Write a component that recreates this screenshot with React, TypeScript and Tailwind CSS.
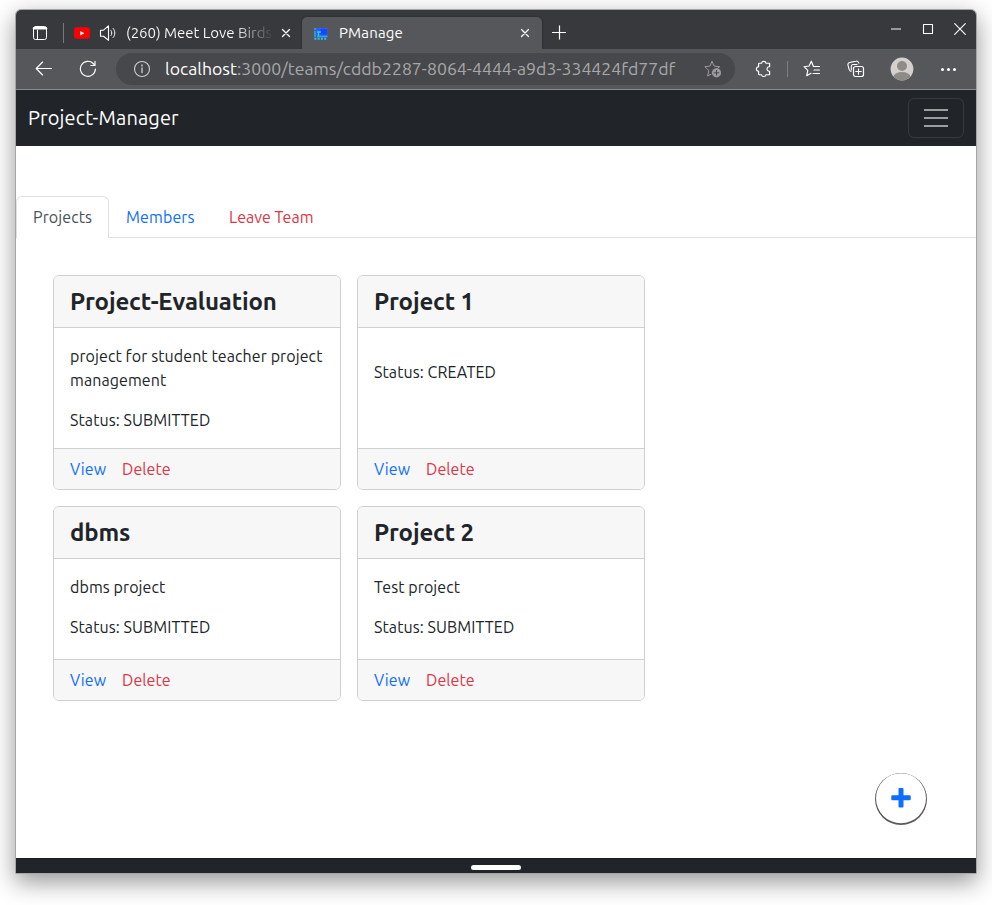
import type { ReactNode } from "react";

type Project = {
  name: string;
  description: string;
  status: string;
};

const projects: Project[] = [
  {
    name: "Project-Evaluation",
    description: "project for student teacher project management",
    status: "SUBMITTED",
  },
  { name: "Project 1", description: "", status: "CREATED" },
  { name: "dbms", description: "dbms project", status: "SUBMITTED" },
  { name: "Project 2", description: "Test project", status: "SUBMITTED" },
];

function Icon({ className, size = 16, children }: { className?: string; size?: number; children: ReactNode }) {
  return (
    <svg
      className={`block shrink-0 ${className ?? ""}`}
      width={size}
      height={size}
      viewBox={`0 0 ${size} ${size}`}
      fill="none"
      stroke="currentColor"
      strokeLinecap="round"
      strokeLinejoin="round"
    >
      {children}
    </svg>
  );
}

function CloseGlyph() {
  return (
    <Icon size={10}>
      <path d="M1.5 1.5 8.5 8.5M8.5 1.5 1.5 8.5" strokeWidth="1.3" />
    </Icon>
  );
}

function TabStrip() {
  return (
    <div className="flex h-[39px] bg-[#38393d] text-white">
      <Icon className="ml-4 mt-[15px]">
        <rect x="1.5" y="1.5" width="13" height="13" rx="2" />
        <path d="M2 3.2h12" strokeWidth="2.4" />
        <path d="M5.5 5v9.5" />
      </Icon>
      <span className="ml-[15px] mt-[13px] h-5 w-px bg-[#77787b]" />
      <Icon className="ml-[10px] mt-4" size={17}>
        <rect x="0" y="1.2" width="16" height="11.6" rx="3" fill="#f00" stroke="none" />
        <path d="M6.3 5v4.5l4-2.25z" fill="white" stroke="none" />
      </Icon>
      <Icon className="ml-2 mt-[14px]" size={18}>
        <path d="M1.5 6.2H4.5L9.5 1.8V16.2L4.5 12.3H1.5Z" strokeWidth="1.1" />
        <path d="M12 6.5c1.1 1.5 1.1 3.5 0 5M14.2 4.5c2.2 2.6 2.2 6.4 0 9" strokeWidth="1" />
      </Icon>
      <span className="ml-[9px] mt-[13px] h-5 w-[145px] overflow-hidden whitespace-nowrap bg-gradient-to-r from-white from-75% to-[#48494c] bg-clip-text text-[15px] leading-5 tracking-[-0.04px] text-transparent">
        (260) Meet Love Birds
      </span>
      <span className="ml-[10px] mt-[18px]"><CloseGlyph /></span>
      <div className="ml-[11px] mt-[7px] flex h-8 w-[240px] rounded-t-[5px] bg-[#56575b] shadow-[0_0_2px_#202124]">
        <Icon className="ml-[11px] mt-[9px]">
          <rect x="3" y="2" width="11.5" height="8.5" fill="#1e65fa" stroke="none" />
          <rect x="7.5" y="3" width="6.5" height="5.5" fill="#1d43ff" stroke="none" />
          <path d="M2 2v2M2 5v6M4 10.5h10.5" stroke="#25aafa" strokeWidth="1.5" strokeLinecap="butt" />
          <path d="M4 6h4M5.5 6v4" stroke="#36c5f5" strokeWidth="1.3" strokeLinecap="butt" />
          <path d="M1.3 12.7h13" stroke="#29c3fa" strokeWidth="2" strokeDasharray="2 1.3" strokeLinecap="butt" />
        </Icon>
        <span className="ml-[10px] mt-[6px] w-[177px] text-[15px] leading-5 tracking-[0.15px]">PManage</span>
        <span className="ml-[4px] mt-[11px]"><CloseGlyph /></span>
      </div>
      <Icon className="ml-[9px] mt-[15px]">
        <path d="M1 7.5h14M8.5 .5v14" strokeWidth="1.2" strokeLinecap="butt" />
      </Icon>
      <div className="ml-auto mr-[10px] mt-[13px] flex gap-[20px]">
        <Icon size={12}><path d="M1 6h10" stroke="#97989a" strokeWidth="2" strokeLinecap="butt" /></Icon>
        <Icon size={12}><rect x="1.5" y="1.5" width="9" height="9" strokeWidth="1.1" /></Icon>
        <Icon size={12}><path d="m.7.7 10.6 10.6M11.3.7.7 11.3" strokeWidth="1.1" /></Icon>
      </div>
    </div>
  );
}

function Toolbar() {
  return (
    <div className="flex h-[41px] items-center border-b border-[#8a8b8d] bg-[#56575b] text-white">
      <Icon className="ml-[19px]" size={18}>
        <path d="M1.2 8.5H16.4M7.6 2 1.2 8.5l6.4 6.5" strokeWidth="1.15" />
      </Icon>
      <Icon className="ml-[26px]" size={18}>
        <path d="M16.4 9A7.5 7.5 0 1 1 14.2 3.5L16 5.3M16 1.3v4.2h-4.2" strokeWidth="1.15" />
      </Icon>
      <div className="ml-[19px] flex h-8 w-[619px] items-center rounded-full bg-[#47484b]">
        <Icon className="ml-[17px] text-[#d0d0d0]" size={18}>
          <circle cx="9" cy="9" r="7.5" strokeWidth="1.1" />
          <path d="M9 8v4.5M9 5v1" strokeWidth="1.3" />
        </Icon>
        <span className="ml-[14px] w-[524px] whitespace-nowrap text-[17.65px] leading-6 tracking-[0.02px] text-[#a8a8a9]">
          <span className="text-white">localhost</span>:3000/teams/cddb2287-8064-4444-a9d3-334424fd77df
        </span>
        <Icon className="ml-[15px] text-[#9b9b9d]" size={18}>
          <path d="m8 1.5 2.1 4.6 5.5.6-3 2.3M8 1.5 5.9 6.1.8 6.7l4 3.8-1.2 5.5L7 14.2" />
          <circle cx="12.5" cy="12.8" r="4.6" fill="currentColor" stroke="none" />
          <path d="M10.2 12.8h4.6M12.5 10.5v4.6" stroke="#47484b" />
        </Icon>
      </div>
      <Icon className="ml-5" size={18}>
        <path d="M4.5 3.2H6.6Q6.8 1.3 8.8 1.3T11 3.2H14.6V6.7H13.8A2.3 2.3 0 0 0 13.8 11.2H14.6V14.7H11Q10.8 16.5 8.8 16.5T6.6 14.7H4.2Q3.6 14.7 3.6 14V11.3Q1.4 11.1 1.4 9T3.6 6.7V4Q3.6 3.2 4.5 3.2Z" strokeWidth="1.15" />
      </Icon>
      <span className="ml-[14px] h-4 w-px bg-[#7d7e81]" />
      <Icon className="ml-[15px]" size={18}>
        <path d="M8.3 1.3 6.1 6 1 6.7l3.8 3.6-1.1 5.4L8 13.3M8.3 1.3l2.2 5.2H16.5M11 10h5.5M10 13.5h6.5" strokeWidth="1.15" />
      </Icon>
      <Icon className="ml-[26px]" size={18}>
        <path d="M4 11.5Q2.4 10.8 2 9L1 5.2Q.5 3 2.7 2.5L9 1.1Q11 .6 11.8 3.2" strokeWidth="1.1" />
        <rect x="6.5" y="6.5" width="10" height="10" rx="2" strokeWidth="1.2" />
        <path d="M8.7 11.5h5.6M11.5 8.7v5.6M4.3 10V6.4Q4.3 4.5 6.2 4.5H10" strokeWidth="1.1" />
      </Icon>
      <svg className="ml-[25px] block" width="24" height="24" viewBox="0 0 24 24">
        <defs><clipPath id="avatar"><circle cx="12" cy="12" r="11.4" /></clipPath></defs>
        <g clipPath="url(#avatar)"><path fill="#d4d1cc" d="M0 0h24v24H0z" /><circle cx="12" cy="9" r="5" fill="#908b87" /><ellipse cx="12" cy="20" rx="8.5" ry="5" fill="#908b87" /></g>
      </svg>
      <span className="ml-[27px] flex gap-[3px]">
        <i className="size-[3px] rounded-full bg-white" /><i className="size-[3px] rounded-full bg-white" /><i className="size-[3px] rounded-full bg-white" />
      </span>
    </div>
  );
}

function ProjectCard({ project }: { project: Project }) {
  return (
    <article className="flex flex-col overflow-hidden rounded-md border border-[#cfcfcf]">
      <header className="h-[52px] shrink-0 border-b border-[#cfcfcf] bg-[#f7f7f7] px-4 pt-2">
        <h2 className="text-2xl font-bold leading-[36px] tracking-[-0.14px]">{project.name}</h2>
      </header>
      <div className="grow pl-4 pt-4 text-base leading-6 tracking-[0.09px]">
        <p className="mb-4 w-[256px]">{project.description}</p>
        <p>Status: {project.status}</p>
      </div>
      <footer className="flex h-[41px] shrink-0 border-t border-[#cfcfcf] bg-[#f7f7f7] px-4 pt-2 text-base leading-6 tracking-[0.09px]">
        <a className="w-[52px] text-[#0d6efd]">View</a>
        <a className="text-[#dc3545]">Delete</a>
      </footer>
    </article>
  );
}

export default function App() {
  return (
    <div className="h-[905px] w-[992px] overflow-hidden bg-white pl-[15px] pt-[9px] font-['Ubuntu','Noto_Sans',sans-serif] text-[#212529]">
      <main className="flex h-[865px] w-[962px] flex-col overflow-hidden rounded-t-[6px] border border-[#a6a6a6] bg-white shadow-[0_8px_24px_rgba(0,0,0,0.42)]">
        <TabStrip />
        <Toolbar />
        <nav className="flex h-14 shrink-0 items-center justify-between bg-[#212529] px-3 text-white">
          <span className="text-xl leading-[30px] tracking-[0.12px]">Project-Manager</span>
          <button className="flex h-10 w-14 flex-col items-center justify-center gap-[6px] rounded-md border border-[#373b3e]">
            <i className="h-[2px] w-6 bg-[#9b9d9f]" /><i className="h-[2px] w-6 bg-[#9b9d9f]" /><i className="h-[2px] w-6 bg-[#9b9d9f]" />
          </button>
        </nav>
        <div className="mt-[50px] flex h-[42px] shrink-0 text-base leading-6">
          <div className="w-[93px] rounded-t-md border border-b-0 border-[#dee2e6] pl-4 pt-2 tracking-[0.1px] text-[#495057]">Projects</div>
          <div className="w-[103px] border-b border-[#dee2e6] pl-[17px] pt-[9px] tracking-[0.12px] text-[#0d6efd]">Members</div>
          <div className="grow border-b border-[#dee2e6] pl-[17px] pt-[9px] text-[#dc3545]">Leave Team</div>
        </div>
        <section className="ml-[37px] mt-[37px] grid w-[592px] shrink-0 grid-cols-2 grid-rows-[215px_195px] gap-4">
          {projects.map((p) => <ProjectCard key={p.name} project={p} />)}
        </section>
        <button className="ml-auto mr-[49px] mt-[72px] flex size-[52px] shrink-0 items-center justify-center rounded-full pb-[2px] text-[#0d6efd] shadow-[inset_0_-0.8px_0_1px_#5d5855]">
          <Icon size={20}><path fill="currentColor" stroke="none" d="M8.5 0h3q1 0 1 1v6.2h6.2q1 0 1 1v3q0 1-1 1h-6.2v6.3q0 1-1 1h-3q-1 0-1-1v-6.3H1.3q-1 0-1-1v-3q0-1 1-1h6.2V1q0-1 1-1z" /></Icon>
        </button>
        <footer className="mt-auto flex h-[15px] shrink-0 justify-center border-t-2 border-[#211f22] bg-[#212529] pt-[5px]">
          <span className="h-[5px] w-[50px] rounded-full bg-white" />
        </footer>
      </main>
    </div>
  );
}
